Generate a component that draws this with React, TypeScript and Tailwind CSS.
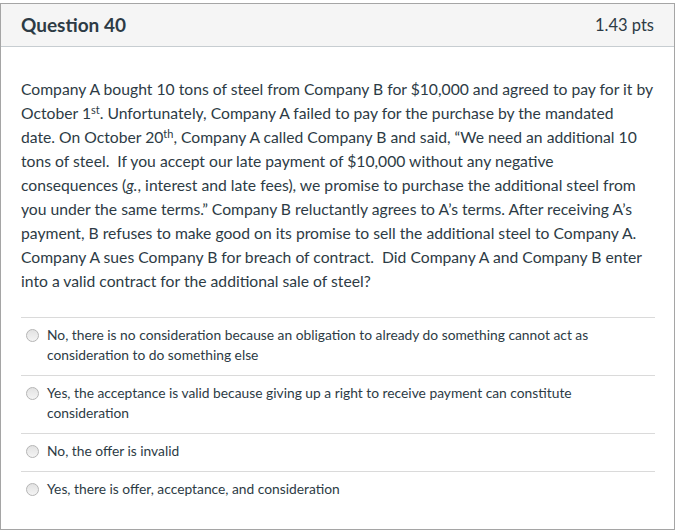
const answers = [
  "No, there is no consideration because an obligation to already do something cannot act as consideration to do something else",
  "Yes, the acceptance is valid because giving up a right to receive payment can constitute consideration",
  "No, the offer is invalid",
  "Yes, there is offer, acceptance, and consideration",
];

function Radio() {
  return (
    <span className="mt-[4px] h-[13px] w-[13px] shrink-0 rounded-full border border-[#b5b5b5] bg-gradient-to-b from-[#e2e2e2] to-[#f4f4f4]" />
  );
}

export default function App() {
  return (
    <div className="bg-white pt-[3px] text-[#2d3b45]" style={{ fontFamily: "Lato, 'Liberation Sans', sans-serif" }}>
      <div className="h-[527px] w-[675px] border border-[#a5a5a5]">
        {/* header */}
        <div className="flex h-[43px] items-center justify-between border-b border-[#c7cdd1] bg-[#f5f5f5] pl-[20px] pr-[20px]">
          <span className="text-[19px] font-bold">Question 40</span>
          <span className="text-[16.5px]">1.43 pts</span>
        </div>

        <div className="pl-[20px] pr-[19px] pt-[30px]">
          <p className="whitespace-nowrap text-[15.7px] leading-[24px]">
            Company A bought 10 tons of steel from Company B for $10,000 and agreed to pay for it by
            <br />
            October 1<sup className="text-[11px]">st</sup>. Unfortunately, Company A failed to pay for the purchase by the
            mandated
            <br />
            date. On October 20<sup className="text-[11px]">th</sup>, Company A called Company B and said, “We need an
            additional 10
            <br />
            tons of steel.&nbsp; If you accept our late payment of $10,000 without any negative
            <br />
            consequences (<i>g.</i>, interest and late fees), we promise to purchase the additional steel from
            <br />
            you under the same terms.” Company B reluctantly agrees to A’s terms. After receiving A’s
            <br />
            payment, B refuses to make good on its promise to sell the additional steel to Company A.
            <br />
            Company A sues Company B for breach of contract.&nbsp; Did Company A and Company B enter
            <br />
            into a valid contract for the additional sale of steel?
          </p>

          {/* answers */}
          <div className="mt-[24px]">
            {answers.map((a) => (
              <div key={a} className="flex gap-[8px] border-t border-[#dadada] pb-[10px] pl-[5px] pt-[7px]">
                <Radio />
                <span className="text-[13.8px] leading-[20px]">{a}</span>
              </div>
            ))}
          </div>
        </div>
      </div>
    </div>
  );
}
